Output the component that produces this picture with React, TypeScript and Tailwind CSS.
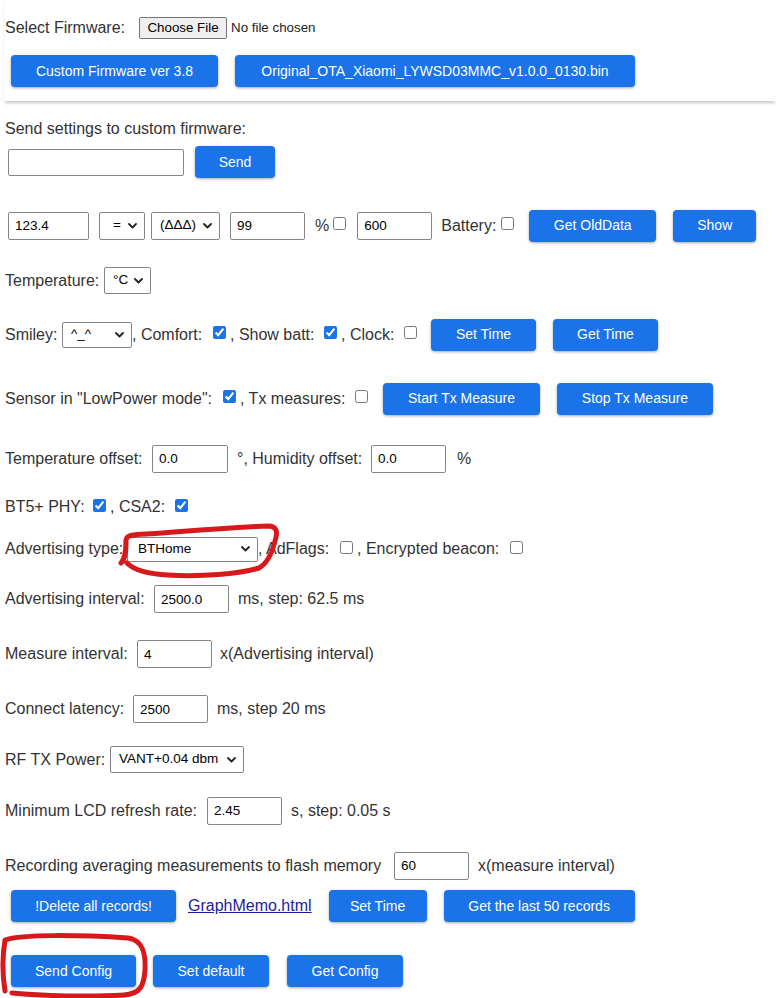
import React from "react";

function Btn({ className = "", children }: { className?: string; children: React.ReactNode }) {
  return (
    <button
      className={
        "h-[32px] shrink-0 rounded-[4px] bg-[#1a73e8] text-[14px] text-white shadow-[0_1px_3px_rgba(0,0,0,0.35)] " +
        className
      }
    >
      {children}
    </button>
  );
}

function TextInput({ value = "", className = "" }: { value?: string; className?: string }) {
  return (
    <input
      type="text"
      defaultValue={value}
      className={
        "h-[28px] w-[75px] shrink-0 rounded-[2px] border border-[#858585] bg-white px-[6px] text-[13.5px] text-black outline-none " +
        className
      }
    />
  );
}

function Select({ value, className = "", pad = "pl-[8px]" }: { value: string; className?: string; pad?: string }) {
  return (
    <div
      className={
        "flex h-[27px] shrink-0 items-center rounded-[2px] border border-[#858585] bg-white " + className
      }
    >
      <select
        defaultValue={value}
        className={"h-full min-w-0 flex-1 appearance-none bg-transparent text-[13.5px] text-black outline-none " + pad}
      >
        <option>{value}</option>
      </select>
      <svg width="9" height="6" viewBox="0 0 9 6" className="mr-[7px] shrink-0">
        <path d="M1 1 L4.5 4.5 L8 1" fill="none" stroke="#222" strokeWidth="1.8" strokeLinecap="round" strokeLinejoin="round" />
      </svg>
    </div>
  );
}

function Check({ checked = false }: { checked?: boolean }) {
  return (
    <input
      type="checkbox"
      defaultChecked={checked}
      className="h-[13px] w-[13px] shrink-0 -translate-y-[2px] accent-[#1a73e8]"
    />
  );
}

export default function App() {
  return (
    <div
      className="relative min-h-[998px] overflow-hidden bg-white pl-[4px] text-[16px] text-[#333]"
      style={{ fontFamily: '"Liberation Sans", Arial, sans-serif' }}
    >
      {/* firmware card */}
      <div className="pb-[14px] pl-[1px] pt-[12px] shadow-[0_3px_3px_-1px_rgba(0,0,0,0.22)]">
        <div className="flex h-[32px] items-center">
          <span className="w-[134px] shrink-0 whitespace-nowrap">Select Firmware:</span>
          <button className="h-[22px] w-[88px] shrink-0 rounded-[2px] border border-[#767676] bg-[#efefef] text-[13.33px] text-black">
            Choose File
          </button>
          <span className="ml-[4px] text-[13.33px] text-[#222]">No file chosen</span>
        </div>
        <div className="mt-[11px] flex h-[32px] items-center">
          <Btn className="ml-[6px] w-[207px]">Custom Firmware ver 3.8</Btn>
          <Btn className="ml-[17px] w-[400px]">Original_OTA_Xiaomi_LYWSD03MMC_v1.0.0_0130.bin</Btn>
        </div>
      </div>

      <div className="pl-[1px]">
        <div className="mt-[16px] flex h-[24px] items-center">Send settings to custom firmware:</div>
        <div className="mt-[5px] flex h-[32px] items-center">
          <TextInput className="ml-[3px] !w-[176px] !h-[27px]" />
          <Btn className="ml-[11px] w-[80px]">Send</Btn>
        </div>

        <div className="mt-[31px] flex h-[33px] items-center">
          <TextInput value="123.4" className="ml-[3px] !w-[81px]" />
          <Select value="=" className="ml-[10px] w-[46px] !h-[28px]" pad="pl-[13px]" />
          <Select value="(ΔΔΔ)" className="ml-[6px] w-[69px] !h-[28px]" pad="pl-[8px]" />
          <TextInput value="99" className="ml-[10px]" />
          <span className="ml-[10px]">%</span>
          <span className="ml-[4px] flex"><Check /></span>
          <TextInput value="600" className="ml-[11px]" />
          <span className="ml-[9px] w-[60px] shrink-0 whitespace-nowrap">Battery:</span>
          <Check />
          <Btn className="ml-[15px] w-[127px]">Get OldData</Btn>
          <Btn className="ml-[17px] w-[83px]">Show</Btn>
        </div>

        <div className="mt-[25px] flex h-[27px] items-center">
          <span className="w-[99px] shrink-0">Temperature:</span>
          <Select value="°C" className="w-[47px]" pad="pl-[8px]" />
        </div>

        <div className="mt-[24px] flex h-[33px] items-center">
          <span className="w-[57px] shrink-0">Smiley:</span>
          <Select value="^_^" className="w-[70px] !h-[26px]" pad="pl-[8px]" />
          <span className="w-[81px] shrink-0 whitespace-nowrap">, Comfort:</span>
          <Check checked />
          <span className="w-[98px] shrink-0 whitespace-nowrap pl-[4px]">, Show batt:</span>
          <Check checked />
          <span className="w-[67px] shrink-0 whitespace-nowrap pl-[4px]">, Clock:</span>
          <Check />
          <Btn className="ml-[14px] w-[105px]">Set Time</Btn>
          <Btn className="ml-[17px] w-[105px]">Get Time</Btn>
        </div>

        <div className="mt-[31px] flex h-[33px] items-center">
          <span className="w-[218px] shrink-0 whitespace-nowrap">Sensor in "LowPower mode":</span>
          <Check checked />
          <span className="w-[119px] shrink-0 whitespace-nowrap pl-[4px]">, Tx measures:</span>
          <Check />
          <Btn className="ml-[15px] w-[157px]">Start Tx Measure</Btn>
          <Btn className="ml-[17px] w-[156px]">Stop Tx Measure</Btn>
        </div>

        <div className="mt-[30px] flex h-[27px] items-center">
          <span className="w-[147px] shrink-0 whitespace-nowrap">Temperature offset:</span>
          <TextInput value="0.0" className="!w-[76px]" />
          <span className="w-[143px] shrink-0 whitespace-nowrap pl-[9px]">°, Humidity offset:</span>
          <TextInput value="0.0" />
          <span className="ml-[11px]">%</span>
        </div>

        <div className="mt-[22px] flex h-[26px] items-center">
          <span className="w-[88px] shrink-0 whitespace-nowrap">BT5+ PHY:</span>
          <Check checked />
          <span className="w-[69px] shrink-0 whitespace-nowrap pl-[4px]">, CSA2:</span>
          <Check checked />
        </div>

        <div className="mt-[16px] flex h-[26px] items-center">
          <span className="w-[122px] shrink-0 whitespace-nowrap">Advertising type:</span>
          <Select value="BTHome" className="w-[131px] !h-[25px]" pad="pl-[10px]" />
          <span className="w-[82px] shrink-0 whitespace-nowrap">, AdFlags:</span>
          <Check />
          <span className="w-[157px] shrink-0 whitespace-nowrap pl-[4px]">, Encrypted beacon:</span>
          <Check />
        </div>

        <div className="mt-[23px] flex h-[28px] items-center">
          <span className="w-[149px] shrink-0 whitespace-nowrap">Advertising interval:</span>
          <TextInput value="2500.0" />
          <span className="ml-[9px] whitespace-nowrap">ms, step: 62.5 ms</span>
        </div>

        <div className="mt-[27px] flex h-[28px] items-center">
          <span className="w-[132px] shrink-0 whitespace-nowrap">Measure interval:</span>
          <TextInput value="4" />
          <span className="ml-[8px] whitespace-nowrap">x(Advertising interval)</span>
        </div>

        <div className="mt-[27px] flex h-[28px] items-center">
          <span className="w-[128px] shrink-0 whitespace-nowrap">Connect latency:</span>
          <TextInput value="2500" />
          <span className="ml-[9px] whitespace-nowrap">ms, step 20 ms</span>
        </div>

        <div className="mt-[23px] flex h-[27px] items-center">
          <span className="w-[105px] shrink-0 whitespace-nowrap">RF TX Power:</span>
          <Select value="VANT+0.04 dbm" className="w-[134px]" pad="pl-[8px]" />
        </div>

        <div className="mt-[24px] flex h-[27px] items-center">
          <span className="w-[202px] shrink-0 whitespace-nowrap">Minimum LCD refresh rate:</span>
          <TextInput value="2.45" />
          <span className="ml-[9px] whitespace-nowrap">s, step: 0.05 s</span>
        </div>

        <div className="mt-[28px] flex h-[27px] items-center">
          <span className="w-[389px] shrink-0 whitespace-nowrap">Recording averaging measurements to flash memory</span>
          <TextInput value="60" />
          <span className="ml-[9px] whitespace-nowrap">x(measure interval)</span>
        </div>

        <div className="mt-[11px] flex h-[32px] items-center">
          <Btn className="ml-[6px] w-[165px]">!Delete all records!</Btn>
          <a href="#" className="ml-[12px] whitespace-nowrap text-[#1c1ca0] underline">
            GraphMemo.html
          </a>
          <Btn className="ml-[17px] w-[98px]">Set Time</Btn>
          <Btn className="ml-[17px] w-[191px]">Get the last 50 records</Btn>
        </div>

        <div className="mt-[33px] flex h-[32px] items-center">
          <Btn className="ml-[6px] w-[125px]">Send Config</Btn>
          <Btn className="ml-[17px] w-[116px]">Set default</Btn>
          <Btn className="ml-[18px] w-[116px]">Get Config</Btn>
        </div>
      </div>

      {/* hand-drawn red marks over the screenshot */}
      <svg className="pointer-events-none absolute left-0 top-0" width="776" height="998" viewBox="0 0 776 998">
        <g fill="none" stroke="#d8191c" strokeWidth="5" strokeLinecap="round" strokeLinejoin="round">
          <path d="M121 563 C126 558, 126 548, 126 540 C127 533, 140 535, 162 533 C200 530, 240 527, 268 526 C277 526, 278 532, 275 541 C272 553, 268 563, 259 568 C240 574, 200 577, 168 575 C148 574, 134 570, 127 563" />
          <path d="M5 991 C2 972, 3 952, 5 940 C22 934, 80 935, 128 938 C142 940, 146 952, 145 970 C144 986, 140 994, 124 995 C90 997, 42 996, 12 993" />
        </g>
      </svg>
    </div>
  );
}
